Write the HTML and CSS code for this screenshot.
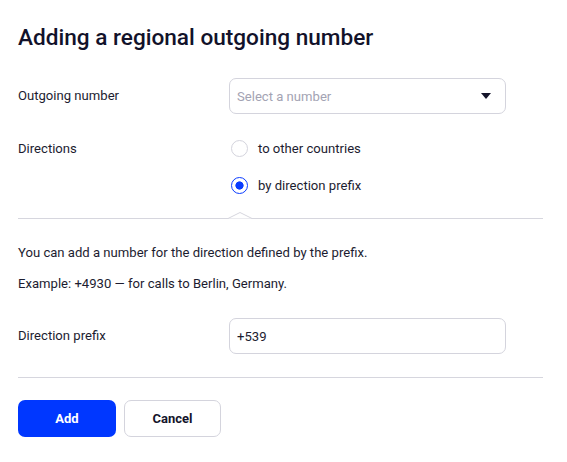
FILE: index.html
```html
<!DOCTYPE html>
<html>
<head>
<meta charset="utf-8">
<link rel="stylesheet" href="styles.css">
</head>
<body>
<div class="dialog">
  <h1 class="title">Adding a regional outgoing number</h1>
  <div class="row row-select">
    <div class="label">Outgoing number</div>
    <div class="select">
      <span class="placeholder">Select a number</span>
      <svg class="caret" width="10" height="6" viewBox="0 0 10 6"><path d="M0 0H10L5 6Z" fill="#14142b"/></svg>
    </div>
  </div>
  <div class="row row-dir">
    <div class="label">Directions</div>
    <div class="radios">
      <div class="radio-item"><span class="radio"></span><span>to other countries</span></div>
      <div class="radio-item"><span class="radio checked"></span><span>by direction prefix</span></div>
    </div>
  </div>
  <div class="divider notched">
    <svg class="notch" width="24" height="7" viewBox="0 0 24 7"><path d="M0 6.5 L12 0.5 L24 6.5" fill="#ffffff" stroke="#d6d6de" stroke-width="1"/></svg>
  </div>
  <p class="info first">You can add a number for the direction defined by the prefix.</p>
  <p class="info">Example: +4930 — for calls to Berlin, Germany.</p>
  <div class="row row-prefix">
    <div class="label">Direction prefix</div>
    <div class="input">+539</div>
  </div>
  <div class="divider"></div>
  <div class="buttons">
    <button class="btn primary">Add</button>
    <button class="btn secondary">Cancel</button>
  </div>
</div>
</body>
</html>
```
FILE: styles.css
```css
html, body {
  margin: 0;
  padding: 0;
  background: #ffffff;
}
body {
  font-family: Roboto, "Liberation Sans", Arial, sans-serif;
  color: #1c1c30;
  font-size: 13.1px;
}
.dialog {
  padding: 24px 24px 0 18px;
  width: 525px;
}
.title {
  margin: 0;
  font-size: 22.6px;
  font-weight: 500;
  line-height: 28px;
  color: #12122a;
}
.row {
  display: grid;
  grid-template-columns: 211px 277px;
  align-items: center;
}
.row-select {
  margin-top: 26px;
}
.label {
  line-height: 16px;
}
.select {
  height: 36px;
  box-sizing: border-box;
  border: 1px solid #d4d4dd;
  border-radius: 7px;
  display: flex;
  align-items: center;
  justify-content: space-between;
  padding: 0 14px 0 7px;
}
.placeholder {
  color: #a3a3b3;
}
.caret {
  display: block;
}
.row-dir {
  margin-top: 26px;
  align-items: start;
}
.row-dir .label {
  margin-top: 1px;
}
.radios {
  display: flex;
  flex-direction: column;
  gap: 20px;
}
.radio-item {
  display: flex;
  align-items: center;
  gap: 10px;
  padding-left: 2px;
  height: 17px;
}
.radio {
  width: 17px;
  height: 17px;
  box-sizing: border-box;
  border: 1px solid #d4d4dd;
  border-radius: 50%;
  display: inline-block;
}
.radio.checked {
  border: 1.6px solid #0a3cff;
  background: radial-gradient(circle, #0a3cff 0 3.8px, #ffffff 4.4px);
}
.divider {
  height: 1px;
  background: #d6d6de;
}
.notched {
  position: relative;
  margin-top: 24px;
}
.notch {
  position: absolute;
  left: 210px;
  top: -6px;
  display: block;
}
.info {
  margin: 0;
  line-height: 16px;
  margin-top: 15px;
}
.info.first {
  margin-top: 26px;
}
.row-prefix {
  margin-top: 26px;
}
.input {
  height: 36px;
  box-sizing: border-box;
  border: 1px solid #d4d4dd;
  border-radius: 7px;
  display: flex;
  align-items: center;
  padding: 0 7px;
  color: #1c1c30;
}
.row-prefix + .divider {
  margin-top: 23px;
}
.buttons {
  display: flex;
  gap: 8px;
  margin-top: 22px;
}
.btn {
  height: 37px;
  width: 98px;
  border-radius: 7px;
  font-family: Roboto, "Liberation Sans", Arial, sans-serif;
  font-size: 13px;
  font-weight: 700;
  cursor: pointer;
}
.btn.primary {
  background: #0037ff;
  color: #ffffff;
  border: none;
}
.btn.secondary {
  background: #ffffff;
  color: #14142b;
  border: 1px solid #d4d4dd;
  width: 97px;
}
```
